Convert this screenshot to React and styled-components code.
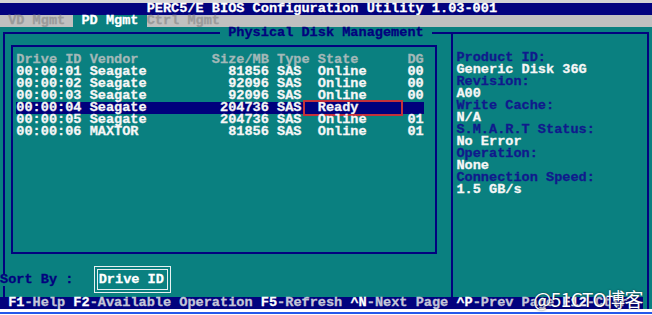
import React from 'react'
import styled, { createGlobalStyle } from 'styled-components'

const NAVY = '#02027e'
const TEAL = '#0a8080'

const drives = [
  { id: '00:00:01', vendor: 'Seagate', size: 81856, type: 'SAS', state: 'Online', dg: '00' },
  { id: '00:00:02', vendor: 'Seagate', size: 92096, type: 'SAS', state: 'Online', dg: '00' },
  { id: '00:00:03', vendor: 'Seagate', size: 92096, type: 'SAS', state: 'Online', dg: '00' },
  { id: '00:00:04', vendor: 'Seagate', size: 204736, type: 'SAS', state: 'Ready', dg: '', selected: true },
  { id: '00:00:05', vendor: 'Seagate', size: 204736, type: 'SAS', state: 'Online', dg: '01' },
  { id: '00:00:06', vendor: 'MAXTOR', size: 81856, type: 'SAS', state: 'Online', dg: '01' },
]

const info = [
  ['Product ID:', 'Generic Disk 36G'],
  ['Revision:', 'A00'],
  ['Write Cache:', 'N/A'],
  ['S.M.A.R.T Status:', 'No Error'],
  ['Operation:', 'None'],
  ['Connection Speed:', '1.5 GB/s'],
]

const keys = [
  ['F1', 'Help'],
  ['F2', 'Available Operation'],
  ['F5', 'Refresh'],
  ['^N', 'Next Page'],
  ['^P', 'Prev Page'],
  ['F12', 'Ctlr'],
]

const Global = createGlobalStyle`
  body {
    margin: 0;
    background: #fff;
  }
`

function App() {
  return (
    <Screen>
      <Global />
      <TopEdge />
      <TitleBar>PERC5/E BIOS Configuration Utility 1.03-001</TitleBar>
      <TabBar>
        <Tab>VD Mgmt</Tab>
        <Tab active>PD Mgmt</Tab>
        <Tab>Ctrl Mgmt</Tab>
      </TabBar>
      <Main>
        <Frame>
          <FrameTitle>Physical Disk Management</FrameTitle>
          <LeftPane>
            <TableBox>
              <Row header>
                <span>Drive ID</span>
                <span>Vendor</span>
                <Num>Size/MB</Num>
                <span />
                <span>Type</span>
                <span>State</span>
                <span>DG</span>
              </Row>
              {drives.map(d => (
                <Row key={d.id} selected={d.selected}>
                  <span>{d.id}</span>
                  <span>{d.vendor}</span>
                  <Num>{d.size}</Num>
                  <span />
                  <span>{d.type}</span>
                  <State marked={d.selected}>{d.state}</State>
                  <span>{d.dg}</span>
                </Row>
              ))}
            </TableBox>
            <SortRow>
              <SortLabel>Sort By :</SortLabel>
              <SortBox>Drive ID</SortBox>
            </SortRow>
          </LeftPane>
          <RightPane>
            {info.map(([label, value]) => (
              <React.Fragment key={label}>
                <InfoLabel>{label}</InfoLabel>
                <InfoValue>{value}</InfoValue>
              </React.Fragment>
            ))}
          </RightPane>
        </Frame>
      </Main>
      <BottomRow>
        <HelpBar>
          {keys.map(([k, text], i) => (
            <React.Fragment key={k}>
              {i > 0 && ' '}
              <Key>{k}</Key>-{text}
            </React.Fragment>
          ))}
        </HelpBar>
        <Cap />
      </BottomRow>
      <Footer />
      <Watermark>@51CTO博客</Watermark>
    </Screen>
  )
}

const Screen = styled.div`
  position: relative;
  width: 652px;
  height: 315px;
  display: flex;
  flex-direction: column;
  overflow: hidden;
  font-family: "Liberation Mono", "DejaVu Sans Mono", monospace;
  font-weight: bold;
  font-size: 13.58px;
  line-height: 12px;
  white-space: pre;
  -webkit-text-stroke: 0.3px currentColor;
`

const TopEdge = styled.div`
  height: 3px;
  background: #d4d4d4;
`

const TitleBar = styled.div`
  height: 12px;
  background: ${NAVY};
  color: #fff;
  padding-left: 18ch;
`

const TabBar = styled.div`
  height: 12px;
  display: flex;
  background: #c0c0c0;
`

const Tab = styled.div`
  padding: 0 1ch;
  color: ${p => (p.active ? '#fff' : '#9a9a9a')};
  background: ${p => (p.active ? TEAL : 'transparent')};
  &:last-child {
    padding-left: 0;
  }
`

const Main = styled.div`
  height: 270px;
  display: flex;
  padding: 0 3px;
  background: ${TEAL};
`

const Frame = styled.fieldset`
  flex: 1;
  min-width: 0;
  margin: 0;
  padding: 0;
  display: flex;
  border: 2px solid ${NAVY};
  border-bottom: 0;
`

const FrameTitle = styled.legend`
  margin-left: 215px;
  padding: 0 1ch;
  height: 12px;
  color: ${NAVY};
`

const LeftPane = styled.div`
  width: 446px;
  display: flex;
  flex-direction: column;
  padding: 6px 0 0 6px;
  box-sizing: border-box;
`

const TableBox = styled.div`
  width: 426px;
  height: 209px;
  box-sizing: border-box;
  border: 2px solid ${NAVY};
  padding: 7px 0 0 3.3px;
`

const Row = styled.div`
  width: 50ch;
  display: grid;
  grid-template-columns: 9ch 15ch 7ch 1ch 5ch 11ch 2ch;
  color: ${p => (p.header ? '#a2b8b8' : '#f6f6f6')};
  background: ${p => (p.selected ? '#00007c' : 'transparent')};
`

const Num = styled.span`
  text-align: right;
`

const State = styled.span`
  position: relative;
  &::after {
    content: '';
    display: ${p => (p.marked ? 'block' : 'none')};
    position: absolute;
    left: -15px;
    right: 4px;
    top: -2px;
    bottom: -2px;
    border: 2px solid #c4323a;
  }
`

const SortRow = styled.div`
  display: flex;
  align-items: center;
  margin-top: 12px;
  height: 27px;
`

const SortLabel = styled.span`
  margin-left: -11px;
  width: 11.5ch;
  color: ${NAVY};
  background: ${TEAL};
`

const SortBox = styled.div`
  border: 4px double #e8f2f2;
  padding: 3.5px 3px 3.5px 1px;
  color: #fff;
`

const RightPane = styled.div`
  flex: 1;
  margin-top: -5px;
  padding: 18px 0 0 3.4px;
  border-left: 2px solid ${NAVY};
  display: flex;
  flex-direction: column;
`

const InfoLabel = styled.div`
  color: #101a8c;
`

const InfoValue = styled.div`
  color: #f6f6f6;
`

const BottomRow = styled.div`
  height: 12px;
  display: flex;
`

const HelpBar = styled.div`
  flex: 1;
  padding-left: 1ch;
  background: ${NAVY};
  color: #c4c6d8;
`

const Key = styled.span`
  color: #fff;
`

const Cap = styled.div`
  width: 9px;
  background: linear-gradient(to right, ${TEAL} 4px, ${NAVY} 4px 6px, ${TEAL} 6px);
`

const Footer = styled.div`
  height: 6px;
  background: linear-gradient(#fff 3px, #2458ea 3px 5px, #fff 5px);
`

const Watermark = styled.div`
  position: absolute;
  right: 9px;
  bottom: 5px;
  font-family: "Noto Sans CJK SC", "Noto Sans", sans-serif;
  font-weight: normal;
  font-size: 19px;
  line-height: 22px;
  color: #fff;
  letter-spacing: -0.5px;
  -webkit-text-stroke: 0;
  text-shadow: 0 0 2px rgba(20, 20, 40, 0.8);
`

export default App
